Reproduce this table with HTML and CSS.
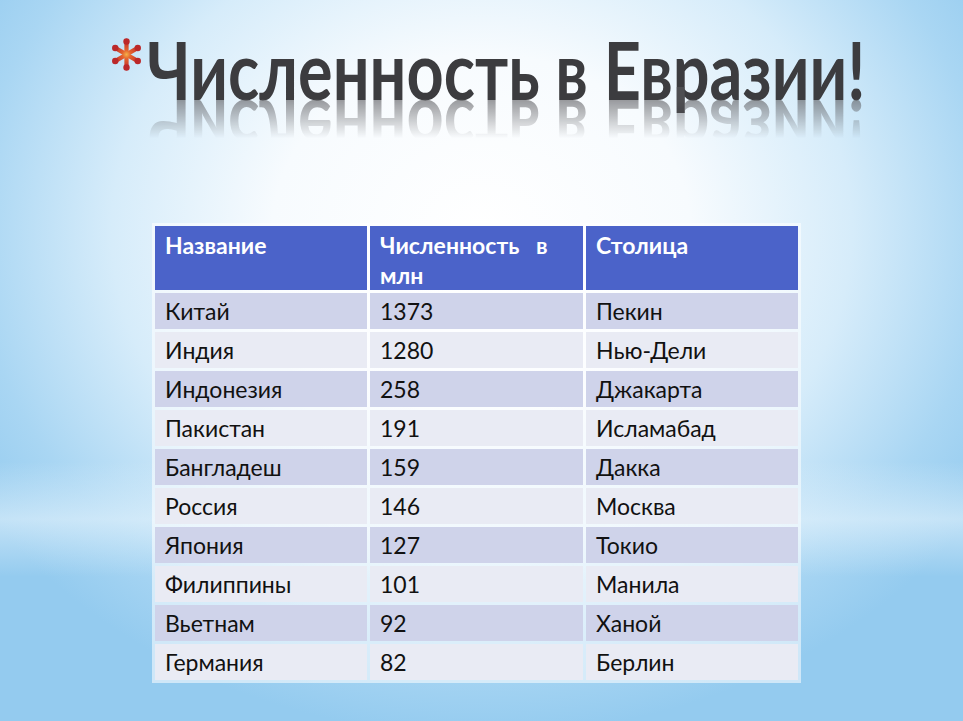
FILE: index.html
```html
<!DOCTYPE html>
<html lang="ru">
<head>
<meta charset="utf-8">
<title>Численность в Евразии!</title>
<link rel="stylesheet" href="styles.css">
</head>
<body>
<div class="slide">
  <h1 class="title"><svg class="star" viewBox="0 0 34 34" aria-hidden="true">
      <defs>
        <radialGradient id="sg" gradientUnits="userSpaceOnUse" cx="17" cy="17" r="15">
          <stop offset="0" stop-color="#f4b04a"/>
          <stop offset="0.3" stop-color="#e4622e"/>
          <stop offset="1" stop-color="#bb282a"/>
        </radialGradient>
      </defs>
      <g stroke="url(#sg)" stroke-width="4.4" stroke-linecap="round" fill="none">
        <line x1="17" y1="3" x2="17" y2="31"/>
        <line x1="4.9" y1="10" x2="29.1" y2="24"/>
        <line x1="4.9" y1="24" x2="29.1" y2="10"/>
      </g>
      <g fill="#bb282a">
        <circle cx="17" cy="3.6" r="3.3"/>
        <circle cx="17" cy="30.4" r="3.3"/>
        <circle cx="5.4" cy="10.3" r="3.3"/>
        <circle cx="28.6" cy="23.7" r="3.3"/>
        <circle cx="5.4" cy="23.7" r="3.3"/>
        <circle cx="28.6" cy="10.3" r="3.3"/>
      </g>
    </svg><span class="title-text" data-text="Численность в Евразии!">Численность в Евразии!</span></h1>
  <table class="data">
    <thead>
      <tr><th>Название</th><th>Численность&nbsp;&nbsp; в<br>млн</th><th>Столица</th></tr>
    </thead>
    <tbody>
      <tr><td>Китай</td><td>1373</td><td>Пекин</td></tr>
      <tr><td>Индия</td><td>1280</td><td>Нью-Дели</td></tr>
      <tr><td>Индонезия</td><td>258</td><td>Джакарта</td></tr>
      <tr><td>Пакистан</td><td>191</td><td>Исламабад</td></tr>
      <tr><td>Бангладеш</td><td>159</td><td>Дакка</td></tr>
      <tr><td>Россия</td><td>146</td><td>Москва</td></tr>
      <tr><td>Япония</td><td>127</td><td>Токио</td></tr>
      <tr><td>Филиппины</td><td>101</td><td>Манила</td></tr>
      <tr><td>Вьетнам</td><td>92</td><td>Ханой</td></tr>
      <tr><td>Германия</td><td>82</td><td>Берлин</td></tr>
    </tbody>
  </table>
</div>
</body>
</html>
```
FILE: styles.css
```css
html, body {
  margin: 0;
  padding: 0;
}
body {
  width: 963px;
  height: 721px;
  overflow: hidden;
}
.slide {
  width: 963px;
  height: 721px;
  box-sizing: border-box;
  padding-top: 24px;
  background:
    linear-gradient(180deg, rgba(255,255,255,0) 0%, rgba(255,255,255,0) 64%, rgba(235,246,253,0.55) 72%, rgba(255,255,255,0) 80%),
    radial-gradient(ellipse 62% 70% at 50% 32%, #ffffff 0%, #f7fbfe 35%, #d6ecfa 62%, #a9d6f3 85%, #94cbef 100%);
  font-family: "Lato", "Open Sans", sans-serif;
}
.title {
  margin: 0 0 0 110px;
  height: 199px;
  display: flex;
  align-items: flex-start;
  white-space: nowrap;
  font-family: "Lato", "Open Sans", sans-serif;
  font-weight: 700;
  font-size: 80px;
  line-height: 90px;
  letter-spacing: 0;
}
.star {
  flex: none;
  width: 33px;
  height: 33px;
  margin-top: 14px;
  margin-right: 4px;
}
.title-text {
  position: relative;
  display: inline-block;
  transform: scaleX(0.81);
  transform-origin: left top;
  color: #3c3c3f;
}
.title-text::after {
  content: attr(data-text);
  position: absolute;
  left: 0;
  top: 62px;
  color: #5a5a5e;
  transform: scaleY(-1);
  -webkit-mask-image: linear-gradient(180deg, transparent 42%, rgba(0,0,0,0.6) 84%);
  mask-image: linear-gradient(180deg, transparent 42%, rgba(0,0,0,0.6) 84%);
  pointer-events: none;
}
.data {
  margin-left: 152px;
  border-collapse: separate;
  border-spacing: 3px;
  background: rgba(255,255,255,0.55);
  font-size: 23px;
  color: #111;
}
.data th, .data td {
  text-align: left;
  vertical-align: top;
  padding: 0 10px;
  box-sizing: border-box;
}
.data th:nth-child(1), .data td:nth-child(1) { width: 212px; }
.data th:nth-child(2), .data td:nth-child(2) { width: 213px; }
.data th:nth-child(3), .data td:nth-child(3) { width: 212px; }
.data th {
  background: #4b63c9;
  color: #fff;
  font-weight: 700;
  font-size: 23px;
  line-height: 30px;
  height: 64px;
  padding-top: 4px;
}
.data td {
  height: 36px;
  line-height: 36px;
}
.data tbody tr:nth-child(odd) td { background: #cfd3ea; }
.data tbody tr:nth-child(even) td { background: #e9ebf4; }
```
